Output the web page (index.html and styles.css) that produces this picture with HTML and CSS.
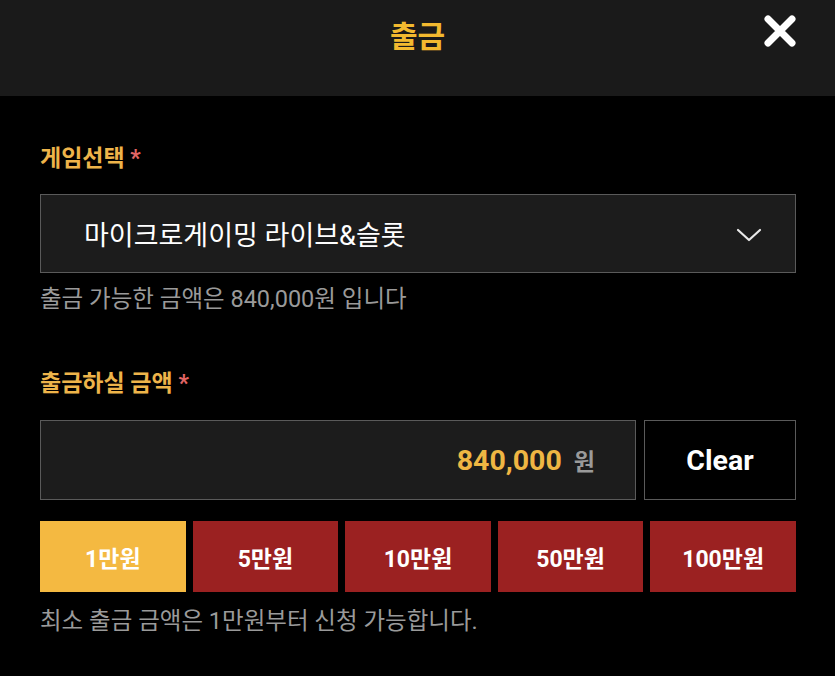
FILE: index.html
```html
<!DOCTYPE html>
<html lang="ko">
<head>
<meta charset="utf-8"/>
<meta content="width=device-width, initial-scale=1.0" name="viewport"/>
<title>출금</title>
<link rel="stylesheet" href="styles.css">
</head>
<body>
<div class="header">
<h1 class="title">출금</h1>
<button class="close-button" aria-label="닫기">
<svg width="36" height="36" viewBox="0 0 36 36"><path d="M6 6 L30 30 M30 6 L6 30" stroke="#fff" stroke-width="7" stroke-linecap="round"/></svg>
</button>
</div>
<div class="content">
<div class="field-label">게임선택 <span class="req">*</span></div>
<div class="select-box">
<span class="select-text">마이크로게이밍 라이브&amp;슬롯</span>
<svg class="chevron" width="26" height="14" viewBox="0 0 26 14"><path d="M2 2 L13 12 L24 2" stroke="#e8e8e8" stroke-width="2.2" fill="none" stroke-linecap="round" stroke-linejoin="round"/></svg>
</div>
<p class="hint">출금 가능한 금액은 840,000원 입니다</p>

<div class="field-label second">출금하실 금액 <span class="req">*</span></div>
<div class="amount-row">
<div class="amount-box">
<span class="amount">840,000</span><span class="won">원</span>
</div>
<button class="clear-button">Clear</button>
</div>
<div class="quick-row">
<button class="quick active">1만원</button>
<button class="quick">5만원</button>
<button class="quick">10만원</button>
<button class="quick">50만원</button>
<button class="quick">100만원</button>
</div>
<p class="hint footer-hint">최소 출금 금액은 1만원부터 신청 가능합니다.</p>
</div>
</body>
</html>
```

FILE: styles.css
```css
body {
    margin: 0;
    background: #000;
    color: #fff;
    font-family: Roboto, "Noto Sans CJK KR", sans-serif;
}
.header {
    height: 96px;
    background: #1a1a1a;
    display: flex;
    justify-content: center;
    align-items: center;
    position: relative;
}
.title {
    margin: 0 0 28px 0;
    color: #f2b92f;
    font-size: 30px;
    font-weight: 700;
}
.close-button {
    position: absolute;
    top: 13px;
    right: 37px;
    background: none;
    border: none;
    padding: 0;
    cursor: pointer;
}
.content {
    padding: 0 39px 0 40px;
}
.field-label {
    margin-top: 48px;
    font-size: 23px;
    font-weight: 700;
    color: #eeb44a;
    line-height: 30px;
}
.field-label.second {
    margin-top: 56px;
}
.req {
    color: #e26565;
}
.select-box {
    margin-top: 20px;
    height: 77px;
    border: 1px solid #5a5a5a;
    background: #1c1c1c;
    display: flex;
    align-items: center;
    justify-content: space-between;
    padding: 0 33px 0 43px;
}
.select-text {
    font-size: 27px;
    color: #fff;
}
.chevron {
    margin-top: 2px;
}
.hint {
    margin: 12px 0 0 0;
    font-size: 23.5px;
    color: #9a9a9a;
    line-height: 28px;
}
.amount-row {
    margin-top: 21px;
    display: flex;
    gap: 8px;
}
.amount-box {
    flex: 1;
    height: 78px;
    border: 1px solid #5a5a5a;
    background: #1c1c1c;
    display: flex;
    align-items: center;
    justify-content: flex-end;
    padding-right: 40px;
}
.amount {
    font-size: 28.5px;
    font-weight: 700;
    color: #efb643;
}
.won {
    margin-left: 12px;
    font-size: 23px;
    font-weight: 700;
    color: #9a9a9a;
}
.clear-button {
    width: 152px;
    height: 80px;
    background: #000;
    border: 1px solid #5a5a5a;
    color: #fff;
    font-family: Roboto, "Noto Sans CJK KR", sans-serif;
    font-size: 28.5px;
    font-weight: 700;
    cursor: pointer;
}
.quick-row {
    margin-top: 21px;
    display: flex;
    gap: 7px;
}
.quick {
    flex: 1;
    height: 71px;
    background: #9b2121;
    border: none;
    color: #fff;
    font-family: Roboto, "Noto Sans CJK KR", sans-serif;
    font-size: 23px;
    font-weight: 700;
    cursor: pointer;
}
.quick.active {
    background: #f4b941;
}
.footer-hint {
    margin-top: 15px;
}
```
